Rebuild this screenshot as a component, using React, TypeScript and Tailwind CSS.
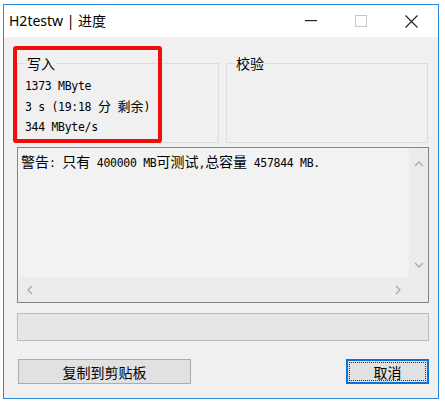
import React from "react";

const mono = "font-['DejaVu_Sans_Mono','Noto_Sans_CJK_SC',monospace]";
const cjk = "font-['Noto_Sans_CJK_SC',sans-serif]";

function Cjk({ children, size = "text-[13px]" }: { children: React.ReactNode; size?: string }) {
  return <span className={`${cjk} ${size} font-normal tracking-normal`}>{children}</span>;
}

function Chevron({ dir }: { dir: "up" | "down" | "left" | "right" }) {
  const d =
    dir === "up"
      ? "M1 6 L5 2 L9 6"
      : dir === "down"
      ? "M1 2 L5 6 L9 2"
      : dir === "left"
      ? "M6 1 L2 5 L6 9"
      : "M2 1 L6 5 L2 9";
  const w = dir === "up" || dir === "down" ? 10 : 8;
  const h = dir === "up" || dir === "down" ? 8 : 10;
  return (
    <svg width={w} height={h} viewBox={`0 0 ${w} ${h}`} fill="none">
      <path d={d} stroke="#a8a8a8" strokeWidth="1.3" />
    </svg>
  );
}

export default function App() {
  return (
    <div className="relative w-[445px] h-[407px] bg-white pl-[3px] pt-[4px] overflow-hidden">
      <div className="w-[436px] h-[395px] border border-[#2a86d6] flex flex-col bg-[#f0f0f0]">
        {/* title bar */}
        <div className="h-[32px] bg-white flex items-center shrink-0">
          <div className="pl-[5px] text-[14px] text-black font-['Noto_Sans','Noto_Sans_CJK_SC',sans-serif] leading-none flex-1">
            H2testw | 进度
          </div>
          <div className="flex items-center h-full">
            <div className="w-[50px] h-full flex items-center justify-center">
              <svg width="12" height="2" viewBox="0 0 12 2">
                <rect x="0" y="0" width="12" height="1.2" fill="#222" />
              </svg>
            </div>
            <div className="w-[50px] h-full flex items-center justify-center">
              <svg width="12" height="12" viewBox="0 0 12 12">
                <rect x="0.5" y="0.5" width="11" height="11" fill="none" stroke="#c8c8c8" />
              </svg>
            </div>
            <div className="w-[50px] h-full flex items-center justify-center mr-[2px]">
              <svg width="13" height="13" viewBox="0 0 13 13">
                <path d="M0.5 0.5 L12.5 12.5 M12.5 0.5 L0.5 12.5" stroke="#222" strokeWidth="1.1" />
              </svg>
            </div>
          </div>
        </div>

        {/* body */}
        <div className="flex-1 flex flex-col pl-[13px] pr-[9px] pt-[18px]">
          <div className="flex gap-[7px] h-[88px]">
            <fieldset className="w-[202px] border border-[#dcdcdc] pl-[7px] pt-[5px]">
              <legend className={`${cjk} text-[14px] leading-[16px] px-[1px] ml-[1px] text-black`}>写入</legend>
              <div className={`${mono} text-[11.5px] tracking-[-0.3px] leading-[20px] text-black`}>
                <div>1373 MByte</div>
                <div>
                  3 s (19:18 <Cjk>分</Cjk> <Cjk>剩余</Cjk>)
                </div>
                <div>344 MByte/s</div>
              </div>
            </fieldset>
            <fieldset className="w-[202px] border border-[#dcdcdc] pl-[7px]">
              <legend className={`${cjk} text-[14px] leading-[16px] px-[1px] ml-[1px] text-black`}>校验</legend>
            </fieldset>
          </div>

          {/* edit box */}
          <div className="mt-[4px] h-[156px] border border-[#858585] flex flex-col">
            <div className="flex flex-1">
              <div className="flex-1 bg-[#f2f2f2] pl-[3px] pt-[4px]">
                <div className={`${mono} text-[11.5px] tracking-[-0.3px] leading-[18px] text-black whitespace-nowrap`}>
                  <Cjk size="text-[14px]">警告</Cjk>: <Cjk size="text-[14px]">只有</Cjk> 400000 MB<Cjk size="text-[14px]">可测试</Cjk>,<Cjk size="text-[14px]">总容量</Cjk> 457844 MB.
                </div>
              </div>
              <div className="w-[19px] bg-[#ececec] flex flex-col items-center justify-between pt-[12px] pb-[8px]">
                <Chevron dir="up" />
                <Chevron dir="down" />
              </div>
            </div>
            <div className="h-[25px] flex">
              <div className="flex-1 bg-[#ececec] flex items-center justify-between pl-[8px] pr-[7px]">
                <Chevron dir="left" />
                <Chevron dir="right" />
              </div>
              <div className="w-[19px] bg-[#ececec]" />
            </div>
          </div>

          {/* progress bar */}
          <div className="mt-[10px] h-[28px] border border-[#bcbcbc] bg-[#e6e6e6]" />

          {/* buttons */}
          <div className="mt-[18px] flex justify-between">
            <button className={`w-[173px] h-[25px] ml-[1px] border border-[#adadad] bg-[#e1e1e1] ${cjk} text-[14px] leading-none text-black flex items-center justify-center`}>
              复制到剪贴板
            </button>
            <button className={`w-[83px] h-[25px] border-2 border-[#0a74d6] bg-[#e1e1e1] p-[1px] ${cjk} text-[14px] leading-none text-black`}>
              <div className="w-full h-full border border-dotted border-[#333] flex items-center justify-center">
                取消
              </div>
            </button>
          </div>
        </div>
      </div>

      {/* red annotation box */}
      <div className="absolute left-[13px] top-[46px] w-[149px] h-[97px] border-[4px] border-[#f20d0d] rounded-[3px] pointer-events-none" />
    </div>
  );
}
